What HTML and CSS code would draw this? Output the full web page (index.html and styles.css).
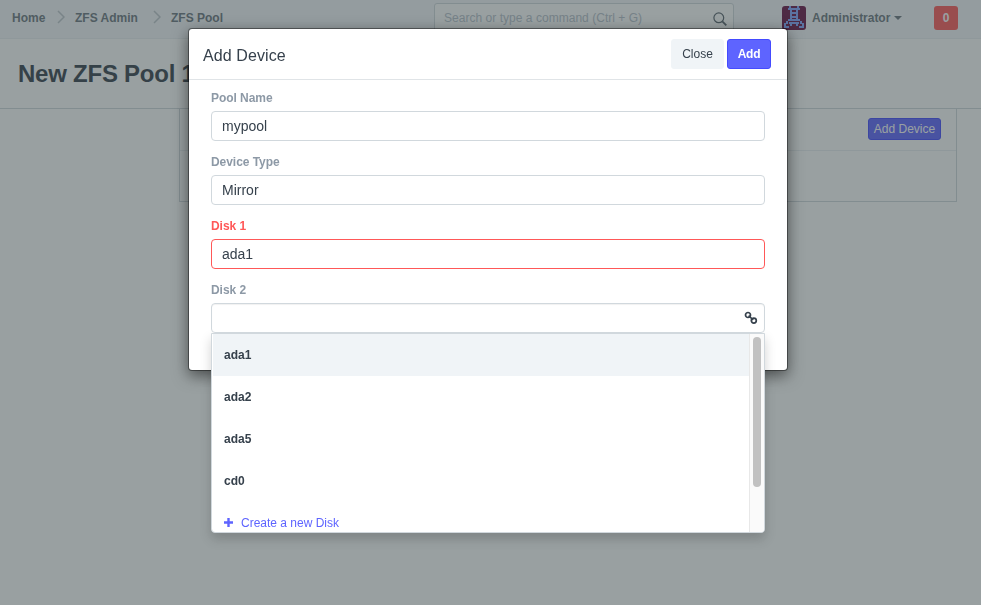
FILE: index.html
```html
<!DOCTYPE html>
<html lang="en">
<head>
<meta charset="utf-8">
<title>New ZFS Pool 1</title>
<link rel="stylesheet" href="styles.css">
</head>
<body>
<header class="navbar">
  <nav class="crumbs">
    <span class="crumb home">Home</span>
    <svg class="chevron" width="8" height="14" viewBox="0 0 8 14"><path d="M1 1l6 6-6 6"/></svg>
    <span class="crumb admin">ZFS Admin</span>
    <svg class="chevron" width="8" height="14" viewBox="0 0 8 14"><path d="M1 1l6 6-6 6"/></svg>
    <span class="crumb pool">ZFS Pool</span>
  </nav>
  <div class="search">
    <span class="search-text">Search or type a command (Ctrl + G)</span>
    <svg width="14" height="14" viewBox="0 0 14 14"><circle cx="5.8" cy="5.8" r="4.9"/><path d="M9.3 9.3l4 4" stroke-width="1.8"/></svg>
  </div>
  <div class="user">
    <svg class="avatar" width="24" height="24" viewBox="0 0 24 24">
      <rect width="24" height="24" rx="3" fill="#691345"/>
      <path d="M8 0v3M16 0v3M6 3h12M9 3v12M15 3v12M9 7h6M9 11h6M6 14h12M5 15v3M19 15v3M3 17v5M21 17v5M3 21h4M17 21h4M7 17h10M9 17v3M15 17v3" stroke="#82a5ff" stroke-width="2"/>
    </svg>
    <span class="user-name">Administrator</span>
    <span class="caret"></span>
  </div>
  <span class="badge">0</span>
</header>
<section class="page-head"><h1>New ZFS Pool 1</h1></section>
<main class="card">
  <div class="card-head"><span class="card-button">Add Device</span></div>
</main>

<div class="backdrop">
  <section class="modal">
    <header class="modal-head">
      <h2>Add Device</h2>
      <button class="btn close">Close</button>
      <button class="btn primary">Add</button>
    </header>
    <div class="modal-body">
      <div class="field"><label>Pool Name</label><div class="input">mypool</div></div>
      <div class="field"><label>Device Type</label><div class="input">Mirror</div></div>
      <div class="field error"><label>Disk 1</label><div class="input">ada1</div></div>
      <div class="field">
        <label>Disk 2</label>
        <div class="input focus">
          <svg class="link" width="14" height="14" viewBox="0 0 14 14"><circle cx="4" cy="4" r="2.5"/><circle cx="9.8" cy="9.6" r="2.5"/><path d="M4.6 4.6l4.6 4.4"/></svg>
        </div>
        <div class="dropdown">
          <ul class="options">
            <li class="active">ada1</li>
            <li>ada2</li>
            <li>ada5</li>
            <li>cd0</li>
            <li class="create"><svg width="9" height="9" viewBox="0 0 9 9"><path d="M4.5 0v9M0 4.5h9"/></svg><span>Create a new Disk</span></li>
          </ul>
          <div class="track"><div class="thumb"></div></div>
        </div>
      </div>
    </div>
  </section>
</div>
</body>
</html>
```
FILE: styles.css
```css
* { box-sizing: border-box; }
body {
  margin: 0;
  height: 605px;
  overflow: hidden;
  background: #fff;
  color: #36414c;
  font: 12px/18px "Liberation Sans", Arial, sans-serif;
}
h1, h2, ul { margin: 0; padding: 0; }
svg { display: block; flex: none; fill: none; stroke: currentColor; }

.navbar {
  display: flex;
  height: 39px;
  padding: 0 23px 0 12px;
  background: #f5f7fa;
  border-bottom: 1px solid #ebeff2;
  color: #6c7680;
  font-weight: bold;
}
.crumbs { display: flex; width: 422px; align-items: flex-start; padding-top: 9px; white-space: nowrap; }
.crumb { width: 63px; }
.crumb.home { width: 45px; }
.crumb.admin { width: 78px; }
.chevron { margin: 1px 10px 0 0; stroke: #bfc6cc; stroke-width: 1.5; }
.search {
  display: flex;
  justify-content: space-between;
  width: 300px;
  height: 30px;
  margin-top: 3px;
  padding: 5px 6px 0 9px;
  background: #fff;
  border: 1px solid #d1d8dd;
  border-radius: 3px;
  color: #b8c2cc;
  font-weight: normal;
}
.search svg { margin-top: 3px; color: #5a646e; stroke-width: 1.2; }
.search-text { letter-spacing: .03px; }
.user { display: flex; align-items: flex-start; width: 152px; padding: 6px 0 0 48px; margin-right: auto; }
.avatar { stroke: none; }
.user-name { margin: 3px 4px 0 6px; white-space: nowrap; letter-spacing: -.03px; }
.caret { margin-top: 10px; border: 4px solid transparent; border-top-color: #6c7680; border-bottom: 0; }
.badge {
  width: 24px;
  height: 24px;
  margin-top: 6px;
  background: #ff5858;
  border-radius: 3px;
  color: #fff;
  line-height: 24px;
  text-align: center;
}

.page-head { height: 70px; padding: 20px 0 0 18px; border-bottom: 1px solid #d1d8dd; }
.page-head h1 { font-size: 24px; line-height: 30px; white-space: nowrap; letter-spacing: -.24px; }
.card { width: 778px; height: 93px; margin-left: 179px; border: 1px solid #d1d8dd; border-top: 0; }
.card-head { display: flex; justify-content: flex-end; height: 42px; padding: 9px 15px 0 0; border-bottom: 1px solid #ebeff2; }
.card-button {
  width: 73px;
  height: 22px;
  background: #5e64ff;
  border: 1px solid #444bff;
  border-radius: 3px;
  color: #fff;
  line-height: 20px;
  text-align: center;
  white-space: nowrap;
}

.backdrop { position: fixed; inset: 0; padding: 28px 0 0 188px; background: rgba(51, 65, 67, .5); }
.modal {
  width: 600px;
  height: 343px;
  background: #fff;
  background-clip: padding-box;
  border: 1px solid rgba(0, 0, 0, .4);
  border-radius: 4px;
  box-shadow: 0 5px 15px rgba(0, 0, 0, .5);
}
.modal-head { display: flex; height: 51px; padding: 10px 16px 0 14px; border-bottom: 1px solid #e0e4e7; }
.modal-head h2 { flex: 1; font-size: 16px; font-weight: normal; line-height: 34px; letter-spacing: .1px; }
.btn { height: 30px; padding: 0; border: 1px solid #f0f4f7; border-radius: 3px; background: #f0f4f7; color: #36414c; font: 12px "Liberation Sans", Arial, sans-serif; }
.close { width: 53px; margin-right: 3px; }
.primary { width: 44px; background: #5e64ff; border-color: #444bff; color: #fff; font-weight: bold; letter-spacing: -.2px; }

.modal-body { padding: 9px 22px 0; }
.field { position: relative; height: 64px; }
.field label { display: block; height: 22px; color: #8d99a6; font-weight: bold; letter-spacing: -.05px; }
.input { display: flex; height: 30px; padding: 0 6px 0 10px; background: #fff; border: 1px solid #d1d8dd; border-radius: 4px; font-size: 14px; line-height: 28px; }
.error label { color: #ff5858; }
.error .input { border-color: #ff5858; }
.focus { position: relative; z-index: 1; box-shadow: inset 0 1px 1px rgba(0, 0, 0, .06); }
.link { margin: 7px 0 0 auto; stroke-width: 1.7; }

.dropdown {
  position: absolute;
  top: 52px;
  left: 0;
  display: flex;
  width: 554px;
  height: 200px;
  overflow: hidden;
  background: #fff;
  border: 1px solid #d1d8dd;
  border-radius: 0 0 4px 4px;
  box-shadow: 0 6px 12px rgba(0, 0, 0, .175);
}
.options { flex: 1; padding-left: 1px; list-style: none; }
.options li { height: 42px; padding-left: 11px; font-weight: bold; line-height: 42px; }
.options .active { background: #f0f4f7; }
.options .create { display: flex; align-items: flex-start; color: #5e64ff; font-weight: normal; }
.create svg { margin: 16px 8px 0 0; stroke-width: 2.4; }
.track { width: 15px; padding: 3px 0 0 3px; background: #fafafa; border-left: 1px solid #e8e8e8; }
.thumb { width: 8px; height: 150px; background: #c1c1c1; border-radius: 4px; }
```
